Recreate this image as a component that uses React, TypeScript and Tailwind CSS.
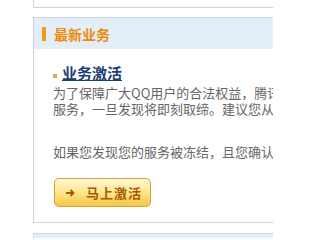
import React from "react";

const font = { fontFamily: '"Noto Sans CJK SC", "Noto Sans", sans-serif' };

export default function App() {
  return (
    <div className="w-[273px] h-[238px] overflow-hidden bg-white" style={font}>
      <div className="pl-[33px]">
        <div className="w-[600px] h-[8px] border-l border-b border-[#c6d6e3] bg-white" />
        <div className="mt-[9px] w-[600px] border-l border-t border-b border-[#c6d6e3] bg-white">
          <div className="h-[31px] bg-[#e4eef7] flex items-center pl-[8px]">
            <div className="w-[4px] h-[14px] bg-[#f29a1c]" />
            <div className="ml-[8px] text-[14px] font-bold text-[#ee8a0c] leading-none">最新业务</div>
          </div>
          <div className="pl-[19px] pt-[14px] pb-[15px]">
            <div className="flex items-center h-[20px]">
              <div className="w-[4px] h-[4px] bg-[#e9a65a] mt-[5px]" />
              <a className="ml-[5px] text-[15px] font-bold text-[#1c3e72] underline leading-[20px] cursor-pointer">
                业务激活
              </a>
            </div>
            <div className="w-[560px] overflow-hidden">
              <p className="text-[13px] leading-[16px] text-[#666666] whitespace-nowrap mt-[2px]">
                为了保障广大QQ用户的合法权益，腾讯严厉打击非法开通的
                <br />
                服务，一旦发现将即刻取缔。建议您从正规渠道开通服务。
              </p>
              <p className="text-[13px] leading-[17px] text-[#666666] whitespace-nowrap mt-[26px]">
                如果您发现您的服务被冻结，且您确认是通过正规渠道开通的，请点击下面按钮激活。
              </p>
            </div>
            <button className="mt-[18px] ml-[1px] w-[97px] h-[29px] rounded-[5px] border border-[#d4a23e] bg-gradient-to-b from-[#fff8d2] via-[#fde58c] to-[#f7c63e] flex items-center pl-[10px] text-[13px] font-bold text-[#a45a06]">
              <svg width="10" height="10" viewBox="0 0 10 10" className="mr-[11px]">
                <path d="M1 5 H8.5 M5.5 2 L8.5 5 L5.5 8" stroke="#a45a06" strokeWidth="1.8" fill="none" />
              </svg>
              <span className="tracking-[1px]">马上激活</span>
            </button>
          </div>
        </div>
        <div className="mt-[10px] w-[600px] h-[40px] border-l border-t border-[#c6d6e3] bg-[#e4eef7]" />
      </div>
    </div>
  );
}
